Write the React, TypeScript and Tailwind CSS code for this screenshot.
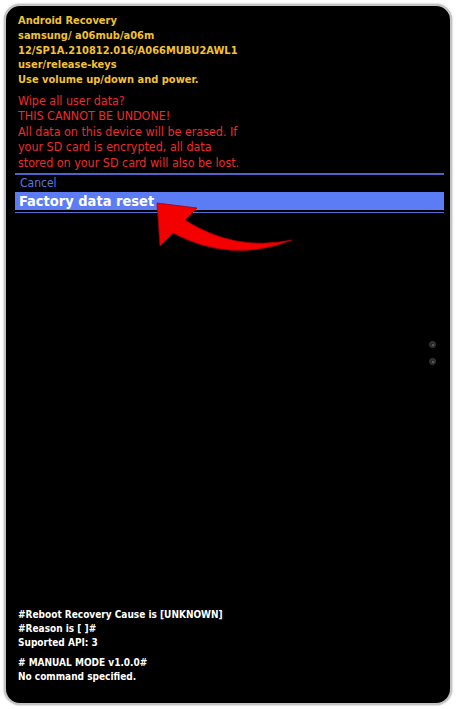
import React from 'react';

const mono = { fontFamily: '"DejaVu Sans Condensed", "DejaVu Sans", sans-serif' };

const headerLines = [
  'Android Recovery',
  'samsung/ a06mub/a06m',
  '12/SP1A.210812.016/A066MUBU2AWL1',
  'user/release-keys',
  'Use volume up/down and power.',
];

const warningLines = [
  'Wipe all user data?',
  'THIS CANNOT BE UNDONE!',
  'All data on this device will be erased. If',
  'your SD card is encrypted, all data',
  'stored on your SD card will also be lost.',
];

const Arrow = () => (
  <svg className="absolute left-0 top-0" width="460" height="300" viewBox="0 0 460 300">
    <path
      d="M157,203 L197,208 L185,220 Q235,252 292,240 Q232,264 173,233 L160,246 Z"
      fill="#f40000"
      stroke="#a80000"
      strokeWidth="0.8"
      strokeLinejoin="round"
    />
  </svg>
);

const Camera = () => (
  <div className="w-[7px] h-[7px] rounded-full bg-[#2a2a2a] border border-[#3c3c3c] flex items-center justify-center">
    <div className="w-[2px] h-[2px] rounded-full bg-[#6a6a6a]" />
  </div>
);

export default function App() {
  return (
    <div className="relative w-[460px] h-[709px] bg-white p-[4px]" style={mono}>
      <div className="relative w-[448px] h-[701px] rounded-[16px] border-2 border-[#c4c4c4] bg-black flex flex-col pt-[8px] pb-[19px] shadow-[0_0_2px_rgba(0,0,0,0.4)]">
        {/* header */}
        <div className="pl-[12px] text-[11px] leading-[14.8px] font-bold text-[#f2c233]">
          {headerLines.map(l => (
            <div key={l}>{l}</div>
          ))}
        </div>

        {/* warning */}
        <div className="pl-[12px] mt-[5px] text-[12.4px] leading-[15.4px] text-[#ee2b2b]">
          {warningLines.map(l => (
            <div key={l}>{l}</div>
          ))}
        </div>

        {/* menu */}
        <div className="ml-[9px] mr-[6px] mt-[3px]">
          <div className="h-[2px] bg-[#4d63c8]" />
          <div className="pl-[5px] h-[17px] text-[12px] leading-[17px] text-[#5a78de]">Cancel</div>
          <div className="h-[18px] bg-[#5b7cf4] pl-[4px] text-[14.5px] leading-[18px] font-bold text-white">
            Factory data reset
          </div>
          <div className="mt-[2px] h-[1px] bg-[#5a6fd0]" />
        </div>

        {/* cameras */}
        <div className="absolute right-[14px] top-[335px] flex flex-col gap-[10px]">
          <Camera />
          <Camera />
        </div>

        {/* footer */}
        <div className="mt-auto pl-[12px] text-[10px] leading-[14px] font-bold text-white">
          <div>#Reboot Recovery Cause is [UNKNOWN]</div>
          <div>#Reason is [ ]#</div>
          <div>Suported API: 3</div>
          <div className="h-[6px]" />
          <div># MANUAL MODE v1.0.0#</div>
          <div>No command specified.</div>
        </div>
      </div>
      <Arrow />
    </div>
  );
}
